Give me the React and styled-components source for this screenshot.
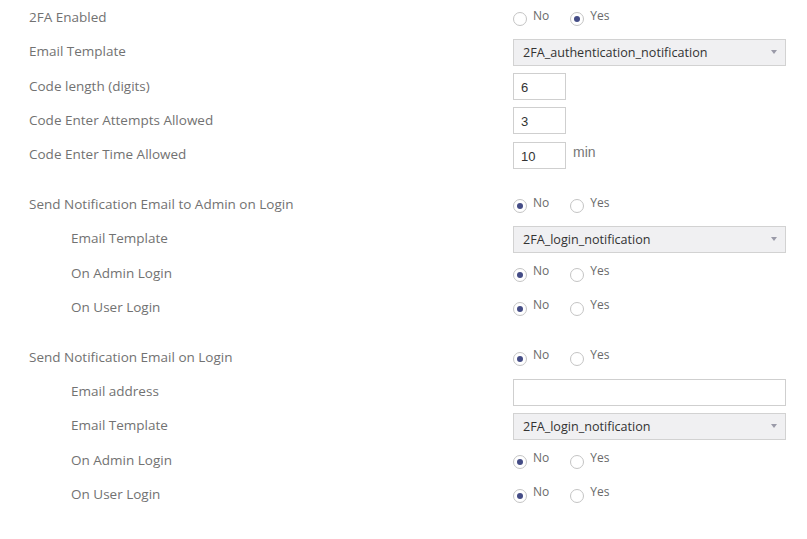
import React from "react";
import styled, { createGlobalStyle } from "styled-components";

const GlobalStyle = createGlobalStyle`
  body {
    margin: 0;
    background: #fff;
    font-family: "Open Sans", "Liberation Sans", sans-serif;
  }
`;

const Form = styled.div`
  padding: 0 21px 0 29px;
`;

const Section = styled.div`
  & + & {
    margin-top: 15.7px;
  }
`;

const Row = styled.div`
  display: grid;
  grid-template-columns: 484px 1fr;
  align-items: center;
  height: 34.25px;
`;

const Label = styled.div`
  font-size: 13.5px;
  color: #727272;
  padding-left: ${(p) => (p.$sub ? "42px" : "0")};
  white-space: nowrap;
`;

const Control = styled.div`
  display: flex;
  align-items: center;
`;

const RadioGroup = styled.div`
  display: flex;
  align-items: center;
  gap: 21px;
`;

const RadioItem = styled.label`
  display: flex;
  align-items: center;
  gap: 6px;
  font-size: 12px;
  color: #6a6a6a;
  span {
    position: relative;
    top: -2px;
  }
`;

const Circle = styled.i`
  display: block;
  width: 14px;
  height: 14px;
  box-sizing: border-box;
  border-radius: 50%;
  border: 1px solid #c4c4c4;
  background: #fff;
  position: relative;
  top: 2px;
  &::after {
    content: "";
    display: ${(p) => (p.$on ? "block" : "none")};
    position: absolute;
    left: 3px;
    top: 3px;
    width: 6px;
    height: 6px;
    border-radius: 50%;
    background: #444c86;
  }
`;

const Select = styled.div`
  width: 273px;
  height: 27px;
  box-sizing: border-box;
  border: 1px solid #d2d2d2;
  background: #f0f0f2;
  display: flex;
  align-items: center;
  justify-content: space-between;
  padding: 0 8px 0 9px;
  font-size: 12.6px;
  color: #333;
  position: relative;
  top: 1px;
`;

const Caret = styled.b`
  width: 0;
  height: 0;
  border-left: 3px solid transparent;
  border-right: 3px solid transparent;
  border-top: 4px solid #9a9aa8;
`;

const Input = styled.div`
  width: ${(p) => p.$w || "53px"};
  height: 27px;
  box-sizing: border-box;
  border: 1px solid #cfcfcf;
  background: #fff;
  display: flex;
  align-items: center;
  padding-left: 7px;
  padding-top: 2px;
  font-family: "Liberation Sans", Arial, sans-serif;
  font-size: 13px;
  color: #333;
  position: relative;
  top: 1px;
`;

const Unit = styled.span`
  font-family: "Liberation Sans", Arial, sans-serif;
  font-size: 14px;
  color: #777;
  margin-left: 7px;
  position: relative;
  top: -2px;
`;

function Radios({ value }) {
  return (
    <RadioGroup>
      <RadioItem>
        <Circle $on={value === "no"} />
        <span>No</span>
      </RadioItem>
      <RadioItem>
        <Circle $on={value === "yes"} />
        <span>Yes</span>
      </RadioItem>
    </RadioGroup>
  );
}

function Field({ label, sub, children }) {
  return (
    <Row>
      <Label $sub={sub}>{label}</Label>
      <Control>{children}</Control>
    </Row>
  );
}

function Dropdown({ value }) {
  return (
    <Select>
      {value}
      <Caret />
    </Select>
  );
}

export default function App() {
  return (
    <>
      <GlobalStyle />
      <Form>
        <Section>
          <Field label="2FA Enabled">
            <Radios value="yes" />
          </Field>
          <Field label="Email Template">
            <Dropdown value="2FA_authentication_notification" />
          </Field>
          <Field label="Code length (digits)">
            <Input>6</Input>
          </Field>
          <Field label="Code Enter Attempts Allowed">
            <Input>3</Input>
          </Field>
          <Field label="Code Enter Time Allowed">
            <Input>10</Input>
            <Unit>min</Unit>
          </Field>
        </Section>
        <Section>
          <Field label="Send Notification Email to Admin on Login">
            <Radios value="no" />
          </Field>
          <Field label="Email Template" sub>
            <Dropdown value="2FA_login_notification" />
          </Field>
          <Field label="On Admin Login" sub>
            <Radios value="no" />
          </Field>
          <Field label="On User Login" sub>
            <Radios value="no" />
          </Field>
        </Section>
        <Section>
          <Field label="Send Notification Email on Login">
            <Radios value="no" />
          </Field>
          <Field label="Email address" sub>
            <Input $w="273px" />
          </Field>
          <Field label="Email Template" sub>
            <Dropdown value="2FA_login_notification" />
          </Field>
          <Field label="On Admin Login" sub>
            <Radios value="no" />
          </Field>
          <Field label="On User Login" sub>
            <Radios value="no" />
          </Field>
        </Section>
      </Form>
    </>
  );
}
